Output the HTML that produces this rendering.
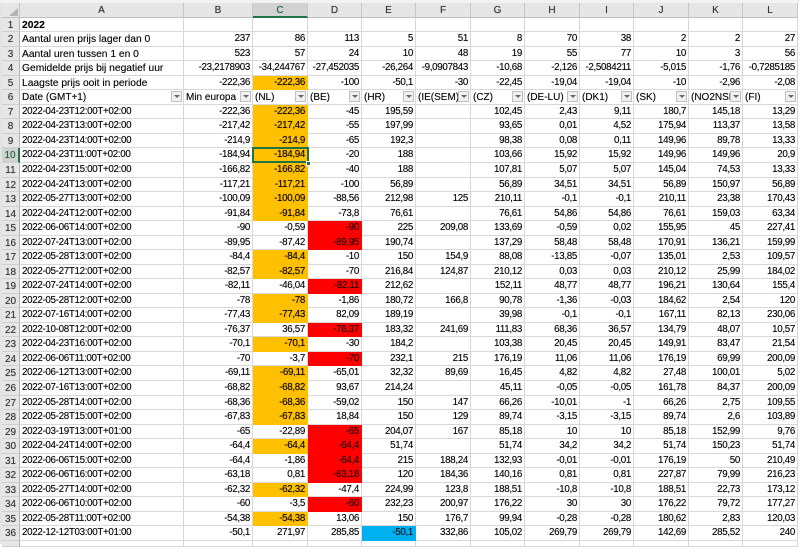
<!DOCTYPE html>
<html><head><meta charset="utf-8">
<style>
html,body{margin:0;padding:0;background:#fff;width:800px;height:544px;overflow:hidden}
#g{position:absolute;left:2px;top:3px;display:grid;grid-template-columns:18px 164px 69px 55px 54px 54px 55px 54px 55px 54px 55px 54px 55px;grid-template-rows:14.7px repeat(36,14.54px) 6px;font:9.8px/14.6px "Liberation Sans",sans-serif;letter-spacing:-.33px;color:#000;text-shadow:0 0 .7px rgba(0,0,0,.45);filter:blur(.2px)}
#g p{margin:0;padding:0 2px 0 0;text-align:right;white-space:nowrap;overflow:hidden;border-right:1px solid #d8d8d8;border-bottom:1px solid #d8d8d8;box-sizing:border-box;position:relative}
#g p.h{background:#e6e6e6;text-align:center;padding:1px 0 0;color:#333;border-right:1px solid #c8c8c8;border-bottom:1px solid #c0c0c0;font-size:10px;letter-spacing:0}
#g p.r{background:#e6e6e6;text-align:center;padding:1px 0 0;color:#333;border-right:1px solid #b4b4b4;border-bottom:1px solid #cfcfcf;font-size:10px;letter-spacing:0}
#g p.l{text-align:left;padding:0 0 0 2px}
#g p.t{font-size:10.3px;letter-spacing:-.02px;padding-top:1px}
#g p.o{background:#ffc000;border-color:#ffc000}
#g p.x{background:#ff0000;border-color:#ff0000;color:#200}
#g p.b{background:#00b0f0;border-color:#00b0f0;color:#012}
#g p.s{background:#d2d2d2;color:#1d6b42}
#g p.c{border-bottom:2px solid #217346}
#g p.w{border-right:2px solid #217346}
#g p.f{font-size:10px;letter-spacing:0;padding-top:1px}
#g p.f::after{content:"";position:absolute;right:1px;top:.5px;width:11px;height:11px;background:#f0f0f0;border:1px solid #c0c0c0;box-sizing:border-box}
#g p.f::before{content:"";position:absolute;right:3.5px;top:5px;border:3px solid transparent;border-top:3px solid #666;border-bottom:0;z-index:1}
#t{position:absolute;left:9px;top:8px;width:0;height:0;border-left:9px solid transparent;border-bottom:8px solid #b4b4b4}
#s{position:absolute;left:252px;top:147.3px;width:57px;height:16px;border:2px solid #217346;box-sizing:border-box}
#q{position:absolute;left:306px;top:160.5px;width:5px;height:5px;background:#217346;border:1px solid #fff;box-sizing:border-box}
#e{position:absolute;left:0;top:0;width:2px;height:544px;background:#dfe6e1}
#u{position:absolute;left:0;top:0;width:800px;height:3px;background:#f2f2f2}
</style></head><body>
<div id="e"></div><div id="u"></div>
<div id="g">
<p class="h"></p><p class="h">A</p><p class="h">B</p><p class="h s c">C</p><p class="h">D</p><p class="h">E</p><p class="h">F</p><p class="h">G</p><p class="h">H</p><p class="h">I</p><p class="h">J</p><p class="h">K</p><p class="h">L</p>
<p class="r">1</p><p class="l t"><b>2022</b></p><p></p><p></p><p></p><p></p><p></p><p></p><p></p><p></p><p></p><p></p><p></p>
<p class="r">2</p><p class="l t">Aantal uren prijs lager dan 0</p><p>237</p><p>86</p><p>113</p><p>5</p><p>51</p><p>8</p><p>70</p><p>38</p><p>2</p><p>2</p><p>27</p>
<p class="r">3</p><p class="l t">Aantal uren tussen 1 en 0</p><p>523</p><p>57</p><p>24</p><p>10</p><p>48</p><p>19</p><p>55</p><p>77</p><p>10</p><p>3</p><p>56</p>
<p class="r">4</p><p class="l t">Gemidelde prijs bij negatief uur</p><p>-23,2178903</p><p>-34,244767</p><p>-27,452035</p><p>-26,264</p><p>-9,0907843</p><p>-10,68</p><p>-2,126</p><p>-2,5084211</p><p>-5,015</p><p>-1,76</p><p>-0,7285185</p>
<p class="r">5</p><p class="l t">Laagste prijs ooit in periode</p><p>-222,36</p><p class="o">-222,36</p><p>-100</p><p>-50,1</p><p>-30</p><p>-22,45</p><p>-19,04</p><p>-19,04</p><p>-10</p><p>-2,96</p><p>-2,08</p>
<p class="r">6</p><p class="l f">Date (GMT+1)</p><p class="l f">Min europa</p><p class="l f">(NL)</p><p class="l f">(BE)</p><p class="l f">(HR)</p><p class="l f">(IE(SEM))</p><p class="l f">(CZ)</p><p class="l f">(DE-LU)</p><p class="l f">(DK1)</p><p class="l f">(SK)</p><p class="l f">(NO2NSL</p><p class="l f">(FI)</p>
<p class="r">7</p><p class="l">2022-04-23T12:00T+02:00</p><p>-222,36</p><p class="o">-222,36</p><p>-45</p><p>195,59</p><p></p><p>102,45</p><p>2,43</p><p>9,11</p><p>180,7</p><p>145,18</p><p>13,29</p>
<p class="r">8</p><p class="l">2022-04-23T13:00T+02:00</p><p>-217,42</p><p class="o">-217,42</p><p>-55</p><p>197,99</p><p></p><p>93,65</p><p>0,01</p><p>4,52</p><p>175,94</p><p>113,37</p><p>13,58</p>
<p class="r">9</p><p class="l">2022-04-23T14:00T+02:00</p><p>-214,9</p><p class="o">-214,9</p><p>-65</p><p>192,3</p><p></p><p>98,38</p><p>0,08</p><p>0,11</p><p>149,96</p><p>89,78</p><p>13,33</p>
<p class="r s w">10</p><p class="l">2022-04-23T11:00T+02:00</p><p>-184,94</p><p class="o">-184,94</p><p>-20</p><p>188</p><p></p><p>103,66</p><p>15,92</p><p>15,92</p><p>149,96</p><p>149,96</p><p>20,9</p>
<p class="r">11</p><p class="l">2022-04-23T15:00T+02:00</p><p>-166,82</p><p class="o">-166,82</p><p>-40</p><p>188</p><p></p><p>107,81</p><p>5,07</p><p>5,07</p><p>145,04</p><p>74,53</p><p>13,33</p>
<p class="r">12</p><p class="l">2022-04-24T13:00T+02:00</p><p>-117,21</p><p class="o">-117,21</p><p>-100</p><p>56,89</p><p></p><p>56,89</p><p>34,51</p><p>34,51</p><p>56,89</p><p>150,97</p><p>56,89</p>
<p class="r">13</p><p class="l">2022-05-27T13:00T+02:00</p><p>-100,09</p><p class="o">-100,09</p><p>-88,56</p><p>212,98</p><p>125</p><p>210,11</p><p>-0,1</p><p>-0,1</p><p>210,11</p><p>23,38</p><p>170,43</p>
<p class="r">14</p><p class="l">2022-04-24T12:00T+02:00</p><p>-91,84</p><p class="o">-91,84</p><p>-73,8</p><p>76,61</p><p></p><p>76,61</p><p>54,86</p><p>54,86</p><p>76,61</p><p>159,03</p><p>63,34</p>
<p class="r">15</p><p class="l">2022-06-06T14:00T+02:00</p><p>-90</p><p>-0,59</p><p class="x">-90</p><p>225</p><p>209,08</p><p>133,69</p><p>-0,59</p><p>0,02</p><p>155,95</p><p>45</p><p>227,41</p>
<p class="r">16</p><p class="l">2022-07-24T13:00T+02:00</p><p>-89,95</p><p>-87,42</p><p class="x">-89,95</p><p>190,74</p><p></p><p>137,29</p><p>58,48</p><p>58,48</p><p>170,91</p><p>136,21</p><p>159,99</p>
<p class="r">17</p><p class="l">2022-05-28T13:00T+02:00</p><p>-84,4</p><p class="o">-84,4</p><p>-10</p><p>150</p><p>154,9</p><p>88,08</p><p>-13,85</p><p>-0,07</p><p>135,01</p><p>2,53</p><p>109,57</p>
<p class="r">18</p><p class="l">2022-05-27T12:00T+02:00</p><p>-82,57</p><p class="o">-82,57</p><p>-70</p><p>216,84</p><p>124,87</p><p>210,12</p><p>0,03</p><p>0,03</p><p>210,12</p><p>25,99</p><p>184,02</p>
<p class="r">19</p><p class="l">2022-07-24T14:00T+02:00</p><p>-82,11</p><p>-46,04</p><p class="x">-82,11</p><p>212,62</p><p></p><p>152,11</p><p>48,77</p><p>48,77</p><p>196,21</p><p>130,64</p><p>155,4</p>
<p class="r">20</p><p class="l">2022-05-28T12:00T+02:00</p><p>-78</p><p class="o">-78</p><p>-1,86</p><p>180,72</p><p>166,8</p><p>90,78</p><p>-1,36</p><p>-0,03</p><p>184,62</p><p>2,54</p><p>120</p>
<p class="r">21</p><p class="l">2022-07-16T14:00T+02:00</p><p>-77,43</p><p class="o">-77,43</p><p>82,09</p><p>189,19</p><p></p><p>39,98</p><p>-0,1</p><p>-0,1</p><p>167,11</p><p>82,13</p><p>230,06</p>
<p class="r">22</p><p class="l">2022-10-08T12:00T+02:00</p><p>-76,37</p><p>36,57</p><p class="x">-76,37</p><p>183,32</p><p>241,69</p><p>111,83</p><p>68,36</p><p>36,57</p><p>134,79</p><p>48,07</p><p>10,57</p>
<p class="r">23</p><p class="l">2022-04-23T16:00T+02:00</p><p>-70,1</p><p class="o">-70,1</p><p>-30</p><p>184,2</p><p></p><p>103,38</p><p>20,45</p><p>20,45</p><p>149,91</p><p>83,47</p><p>21,54</p>
<p class="r">24</p><p class="l">2022-06-06T11:00T+02:00</p><p>-70</p><p>-3,7</p><p class="x">-70</p><p>232,1</p><p>215</p><p>176,19</p><p>11,06</p><p>11,06</p><p>176,19</p><p>69,99</p><p>200,09</p>
<p class="r">25</p><p class="l">2022-06-12T13:00T+02:00</p><p>-69,11</p><p class="o">-69,11</p><p>-65,01</p><p>32,32</p><p>89,69</p><p>16,45</p><p>4,82</p><p>4,82</p><p>27,48</p><p>100,01</p><p>5,02</p>
<p class="r">26</p><p class="l">2022-07-16T13:00T+02:00</p><p>-68,82</p><p class="o">-68,82</p><p>93,67</p><p>214,24</p><p></p><p>45,11</p><p>-0,05</p><p>-0,05</p><p>161,78</p><p>84,37</p><p>200,09</p>
<p class="r">27</p><p class="l">2022-05-28T14:00T+02:00</p><p>-68,36</p><p class="o">-68,36</p><p>-59,02</p><p>150</p><p>147</p><p>66,26</p><p>-10,01</p><p>-1</p><p>66,26</p><p>2,75</p><p>109,55</p>
<p class="r">28</p><p class="l">2022-05-28T15:00T+02:00</p><p>-67,83</p><p class="o">-67,83</p><p>18,84</p><p>150</p><p>129</p><p>89,74</p><p>-3,15</p><p>-3,15</p><p>89,74</p><p>2,6</p><p>103,89</p>
<p class="r">29</p><p class="l">2022-03-19T13:00T+01:00</p><p>-65</p><p>-22,89</p><p class="x">-65</p><p>204,07</p><p>167</p><p>85,18</p><p>10</p><p>10</p><p>85,18</p><p>152,99</p><p>9,76</p>
<p class="r">30</p><p class="l">2022-04-24T14:00T+02:00</p><p>-64,4</p><p class="o">-64,4</p><p class="x">-64,4</p><p>51,74</p><p></p><p>51,74</p><p>34,2</p><p>34,2</p><p>51,74</p><p>150,23</p><p>51,74</p>
<p class="r">31</p><p class="l">2022-06-06T15:00T+02:00</p><p>-64,4</p><p>-1,86</p><p class="x">-64,4</p><p>215</p><p>188,24</p><p>132,93</p><p>-0,01</p><p>-0,01</p><p>176,19</p><p>50</p><p>210,49</p>
<p class="r">32</p><p class="l">2022-06-06T16:00T+02:00</p><p>-63,18</p><p>0,81</p><p class="x">-63,18</p><p>120</p><p>184,36</p><p>140,16</p><p>0,81</p><p>0,81</p><p>227,87</p><p>79,99</p><p>216,23</p>
<p class="r">33</p><p class="l">2022-05-27T14:00T+02:00</p><p>-62,32</p><p class="o">-62,32</p><p>-47,4</p><p>224,99</p><p>123,8</p><p>188,51</p><p>-10,8</p><p>-10,8</p><p>188,51</p><p>22,73</p><p>173,12</p>
<p class="r">34</p><p class="l">2022-06-06T10:00T+02:00</p><p>-60</p><p>-3,5</p><p class="x">-60</p><p>232,23</p><p>200,97</p><p>176,22</p><p>30</p><p>30</p><p>176,22</p><p>79,72</p><p>177,27</p>
<p class="r">35</p><p class="l">2022-05-28T11:00T+02:00</p><p>-54,38</p><p class="o">-54,38</p><p>13,06</p><p>150</p><p>176,7</p><p>99,94</p><p>-0,28</p><p>-0,28</p><p>180,62</p><p>2,83</p><p>120,03</p>
<p class="r">36</p><p class="l">2022-12-12T03:00T+01:00</p><p>-50,1</p><p>271,97</p><p>285,85</p><p class="b">-50,1</p><p>332,86</p><p>105,02</p><p>269,79</p><p>269,79</p><p>142,69</p><p>285,52</p><p>240</p>
<p class="r"></p><p></p><p></p><p></p><p></p><p></p><p></p><p></p><p></p><p></p><p></p><p></p><p></p>
</div>
<div id="t"></div><div id="s"></div><div id="q"></div>
</body></html>
